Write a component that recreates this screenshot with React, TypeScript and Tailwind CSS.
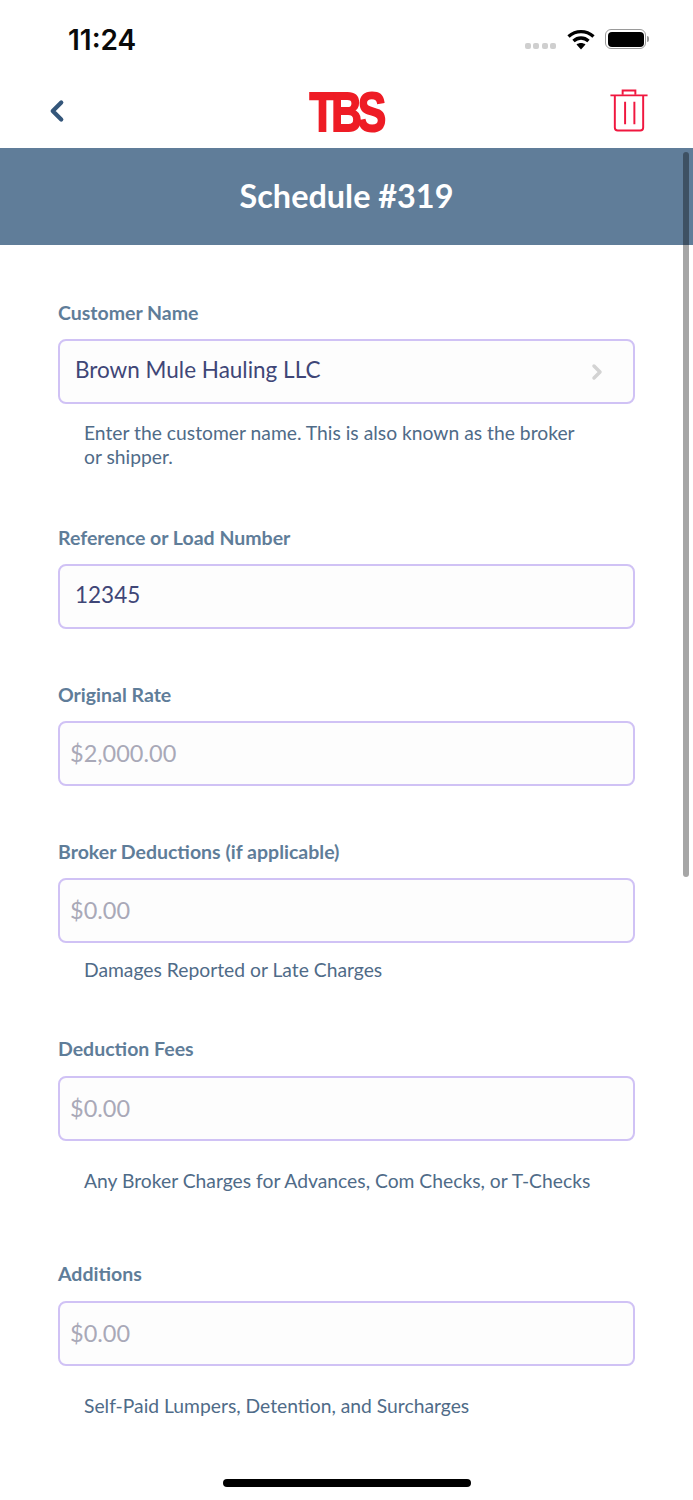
import { ChevronLeft, ChevronRight } from "lucide-react";

interface FieldProps {
  label: string;
  value: string;
  placeholder?: boolean;
  chevron?: boolean;
  help?: string[];
  helpClass?: string;
  labelClass?: string;
  className?: string;
}

function Field({ label, value, placeholder, chevron, help, helpClass, labelClass, className }: FieldProps) {
  return (
    <div className={className}>
      <p className={"text-[19.5px] leading-[24px] font-bold text-[#5f7d99] " + labelClass}>{label}</p>
      <div className="mt-[14px] flex h-[65px] items-center justify-between rounded-[8px] border-2 border-[#d0c2f5] bg-[#fdfdfd] pr-[24px]">
        {placeholder ? (
          <span className="pb-[2px] pl-[10px] text-[23.5px] leading-[30px] text-[#a9a9b8]">{value}</span>
        ) : (
          <span className="pb-[3px] pl-[15px] text-[22.5px] leading-[30px] text-[#3f4677]">{value}</span>
        )}
        {chevron && <ChevronRight className="h-[24px] w-[24px] text-[#d3d3d3]" strokeWidth={3.5} />}
      </div>
      {help && (
        <div className={"pl-[26px] text-[19.3px] leading-[24px] text-[#4f6b88] " + helpClass}>
          {help.map((line) => (
            <p key={line}>{line}</p>
          ))}
        </div>
      )}
    </div>
  );
}

function StatusBar() {
  return (
    <div className="flex h-[78px] items-start justify-between pt-[23px] pl-[68px] pr-[44px]">
      <span className="font-['Inter',sans-serif] text-[28px] leading-[34px] font-semibold text-[#0a0a0a]">11:24</span>
      <div className="flex items-start pt-[6px]">
        <div className="mt-[14px] mr-[11px] flex gap-[2.5px]">
          <span className="h-[6px] w-[6px] rounded-[2px] bg-[#cfcfcf]" />
          <span className="h-[6px] w-[6px] rounded-[2px] bg-[#cfcfcf]" />
          <span className="h-[6px] w-[6px] rounded-[2px] bg-[#cfcfcf]" />
          <span className="h-[6px] w-[6px] rounded-[2px] bg-[#cfcfcf]" />
        </div>
        <svg width="28" height="21" viewBox="0 0 28 21" className="mr-[10px]">
          <path d="M1.5 7.5C9 1 19 1 26.5 7.5" fill="none" stroke="#000" strokeWidth="3.4" />
          <path d="M6.5 12C11 8 17 8 21.5 12" fill="none" stroke="#000" strokeWidth="3.4" />
          <path d="M14 20.5L9.5 15.5C12 13.5 16 13.5 18.5 15.5Z" fill="#000" />
        </svg>
        <div className="flex items-center">
          <div className="flex h-[20px] w-[41px] items-center justify-center rounded-[6px] border border-[#9a9a9a]">
            <div className="h-[15px] w-[36px] rounded-[4px] bg-black" />
          </div>
          <div className="ml-[1px] h-[6px] w-[2px] rounded-r-full bg-[#9a9a9a]" />
        </div>
      </div>
    </div>
  );
}

export default function App() {
  return (
    <div className="relative h-[1500px] w-[693px] overflow-hidden bg-white font-['Lato',sans-serif]">
      <StatusBar />

      <div className="grid h-[70px] grid-cols-[1fr_auto_1fr] items-center pl-[40px] pr-[45px]">
        <ChevronLeft className="mt-[-5px] h-[34px] w-[34px] text-[#34567a]" strokeWidth={3} />
        <span className="mt-[-2px] ml-[3px] origin-center scale-x-[0.76] font-['Liberation_Sans',sans-serif] text-[56px] leading-[56px] font-bold tracking-[-5.5px] text-[#ee1c25] [-webkit-text-stroke:2px_#ee1c25]">
          TBS
        </span>
        <svg width="38" height="43" viewBox="0 0 38 44" fill="none" stroke="#f0173f" strokeWidth="2" className="mt-[-6px] justify-self-end">
          <path d="M0 6.5H38" />
          <path d="M12.5 6V1.5H25.5V6" />
          <path d="M4.5 7V39.5Q4.5 42.5 7.5 42.5H30.5Q33.5 42.5 33.5 39.5V7" />
          <path d="M15 13V36M24.5 13V36" />
        </svg>
      </div>

      <div className="flex h-[97px] items-center justify-center bg-[#607d99]">
        <h1 className="text-[32.4px] font-bold text-white">Schedule #319</h1>
      </div>

      <div className="px-[58px] pt-[56px]">
        <Field
          label="Customer Name"
          value="Brown Mule Hauling LLC"
          chevron
          help={["Enter the customer name. This is also known as the broker", "or shipper."]}
          helpClass="mt-[17px]"
        />
        <Field label="Reference or Load Number" value="12345" className="mt-[57px]" />
        <Field label="Original Rate" value="$2,000.00" placeholder className="mt-[54px]" />
        <Field
          label="Broker Deductions (if applicable)"
          value="$0.00"
          placeholder
          help={["Damages Reported or Late Charges"]}
          helpClass="mt-[15px]"
          className="mt-[54px]"
        />
        <Field
          label="Deduction Fees"
          value="$0.00"
          placeholder
          help={["Any Broker Charges for Advances, Com Checks, or T-Checks"]}
          helpClass="mt-[28px]"
          labelClass="pb-[1px]"
          className="mt-[55px]"
        />
        <Field
          label="Additions"
          value="$0.00"
          placeholder
          help={["Self-Paid Lumpers, Detention, and Surcharges"]}
          helpClass="mt-[28px]"
          labelClass="pb-[1px]"
          className="mt-[69px]"
        />
      </div>

      {/* scroll indicator sits over the page */}
      <div className="absolute top-[152px] right-[4px] h-[725px] w-[6px] rounded-full bg-black/35" />

      <div className="absolute bottom-[13px] left-[223px] h-[8px] w-[248px] rounded-full bg-black" />
    </div>
  );
}
